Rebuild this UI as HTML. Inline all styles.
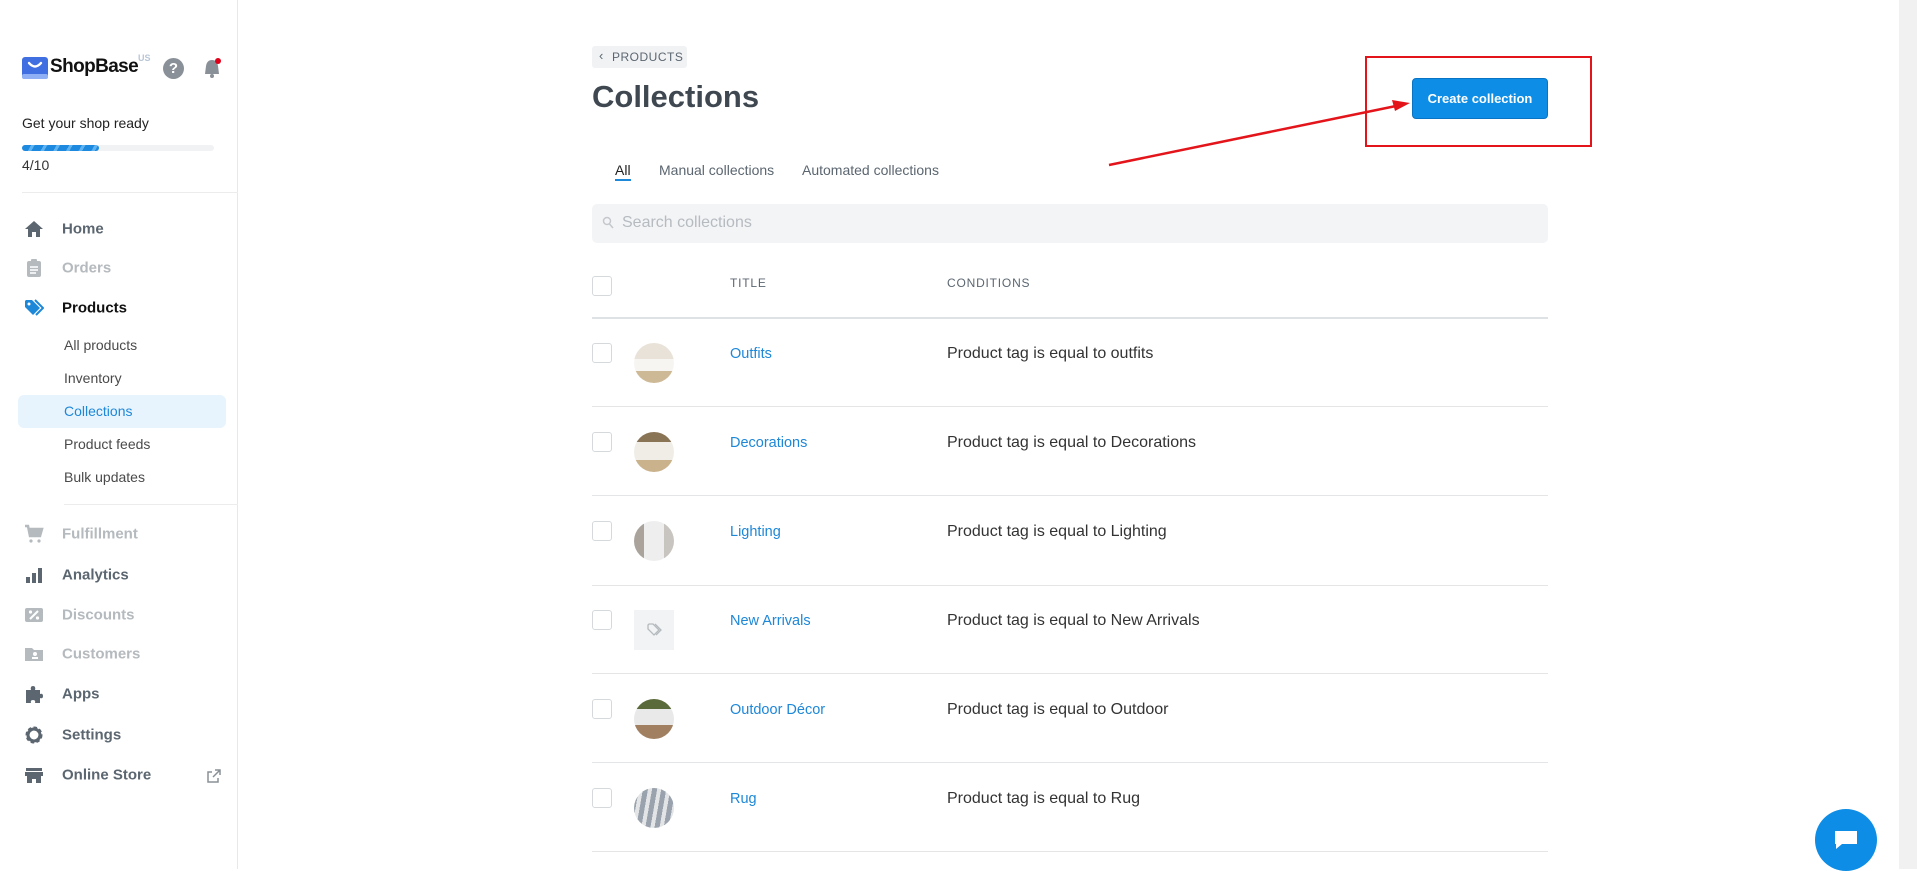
<!DOCTYPE html>
<html><head><meta charset="utf-8"><style>
*{margin:0;padding:0;box-sizing:border-box}
body{width:1917px;height:869px;overflow:hidden;background:#fff;font-family:"Liberation Sans",sans-serif;position:relative;color:#333}
.a{position:absolute;white-space:nowrap}
#sb{position:absolute;left:0;top:0;width:238px;height:869px;border-right:1px solid #e8e8e8;background:#fff}
.nav{position:absolute;left:62px;font-size:15px;font-weight:bold;color:#5b6670;transform:translateY(-50%)}
.nav.dim{color:#b5babe}
.ic{position:absolute;left:24px;width:20px;height:20px;transform:translateY(-50%)}
.sub{position:absolute;left:64px;font-size:14px;color:#4a4a4a;transform:translateY(-50%)}
.row{position:absolute;left:592px;width:956px;border-bottom:1px solid #e3e5e7}
.cb{position:absolute;width:20px;height:20px;border:1px solid #d6d9dc;border-radius:3px;background:#fff}
.th{position:absolute;width:40px;height:40px;border-radius:50%;overflow:hidden}
.tl{position:absolute;left:730px;font-size:14.5px;color:#1d87d8;transform:translateY(-50%)}
.cd{position:absolute;left:947px;font-size:16px;color:#333;transform:translateY(-50%)}
</style></head><body>
<div id="sb">
<svg class="a" style="left:22px;top:57px" width="26" height="22" viewBox="0 0 26 22"><rect x="0" y="0" width="26" height="22" rx="3" fill="#3f6fe0"/><rect x="0" y="17" width="26" height="5" rx="2" fill="#8fb0f5"/><path d="M7 6 Q13 13 19 6" stroke="#fff" stroke-width="2.4" fill="none" stroke-linecap="round"/></svg>
<div class="a" style="left:50px;top:56px;font-size:19px;font-weight:bold;color:#111;letter-spacing:-0.6px">ShopBase</div>
<div class="a" style="left:138px;top:53px;font-size:9px;font-weight:bold;color:#b9c6d6">US</div>
<div class="a" style="left:163px;top:58px;width:21px;height:21px;border-radius:50%;background:#8a9097;color:#fff;font-weight:bold;font-size:15px;text-align:center;line-height:21px">?</div>
<svg class="a" style="left:202px;top:57px" width="20" height="22" viewBox="0 0 20 22"><path d="M3 17 L4 9 Q5 3 10 3 Q15 3 16 9 L17 17 Z" fill="#8a9097"/><circle cx="10" cy="19" r="2" fill="#8a9097"/><circle cx="16" cy="4" r="3" fill="#e0001a"/></svg>
<div class="a" style="left:22px;top:115px;font-size:14px;color:#222">Get your shop ready</div>
<div class="a" style="left:22px;top:145px;width:192px;height:6px;border-radius:3px;background:#f0f2f4"></div>
<div class="a" style="left:22px;top:145px;width:77px;height:6px;border-radius:3px;background:repeating-linear-gradient(120deg,#1d8ae0 0 8px,#5fb3f0 8px 11px)"></div>
<div class="a" style="left:22px;top:157px;font-size:14px;color:#333">4/10</div>
<div class="a" style="left:22px;top:192px;width:216px;height:1px;background:#ececec"></div>
<svg class="ic" style="top:229px" viewBox="0 0 20 20"><path d="M10 2 L1 10 H4 V18 H8 V13 H12 V18 H16 V10 H19 Z" fill="#5b6670"/></svg><div class="nav" style="top:229px">Home</div>
<svg class="ic" style="top:268px" viewBox="0 0 20 20"><rect x="3" y="3" width="14" height="16" rx="2" fill="#b5babe"/><rect x="7" y="1" width="6" height="4" rx="1" fill="#b5babe"/><path d="M6 9h8M6 12h8M6 15h6" stroke="#fff" stroke-width="1.5"/></svg><div class="nav dim" style="top:268px">Orders</div>
<svg class="ic" style="top:308px" viewBox="0 0 20 20"><path d="M1 3 V9 L9 17 L16 10 L8 2 H2 Z" fill="#1d87d8"/><circle cx="5" cy="6" r="1.5" fill="#fff"/><path d="M11 2 L19 10 L12 17" stroke="#1d87d8" stroke-width="2" fill="none"/></svg><div class="nav" style="top:308px;color:#111">Products</div>
<div class="sub" style="top:345px">All products</div>
<div class="sub" style="top:378px">Inventory</div>
<div class="a" style="left:18px;top:395px;width:208px;height:33px;border-radius:6px;background:#e8f4fd"></div>
<div class="sub" style="top:411px;color:#1d87d8">Collections</div>
<div class="sub" style="top:444px">Product feeds</div>
<div class="sub" style="top:477px">Bulk updates</div>
<div class="a" style="left:64px;top:504px;width:174px;height:1px;background:#ececec"></div>
<svg class="ic" style="top:534px" viewBox="0 0 20 20"><path d="M1 2 H4 L6 12 H16 L18 5 H5" stroke="#b5babe" stroke-width="2.5" fill="#b5babe"/><circle cx="7" cy="17" r="1.6" fill="#b5babe"/><circle cx="15" cy="17" r="1.6" fill="#b5babe"/></svg><div class="nav dim" style="top:534px">Fulfillment</div>
<svg class="ic" style="top:575px" viewBox="0 0 20 20"><rect x="2" y="12" width="4" height="6" fill="#5b6670"/><rect x="8" y="8" width="4" height="10" fill="#5b6670"/><rect x="14" y="3" width="4" height="15" fill="#5b6670"/></svg><div class="nav" style="top:575px">Analytics</div>
<svg class="ic" style="top:615px" viewBox="0 0 20 20"><rect x="1" y="3" width="18" height="14" rx="2" fill="#b5babe"/><path d="M6 14 L14 6" stroke="#fff" stroke-width="2"/><circle cx="6.5" cy="7" r="1.6" fill="#fff"/><circle cx="13.5" cy="13" r="1.6" fill="#fff"/></svg><div class="nav dim" style="top:615px">Discounts</div>
<svg class="ic" style="top:654px" viewBox="0 0 20 20"><path d="M1 4 H8 L10 6 H19 V17 H1 Z" fill="#b5babe"/><circle cx="11" cy="10" r="2" fill="#fff"/><rect x="8" y="13" width="6" height="2" fill="#fff"/></svg><div class="nav dim" style="top:654px">Customers</div>
<svg class="ic" style="top:694px" viewBox="0 0 20 20"><path d="M2 6 H7 Q6 2 9 2 Q12 2 11 6 H16 V10 Q19 9 19 12 Q19 15 16 14 V19 H11 Q12 16 9 16 Q6 16 7 19 H2 Z" fill="#5b6670"/></svg><div class="nav" style="top:694px">Apps</div>
<svg class="ic" style="top:735px" viewBox="0 0 20 20"><circle cx="10" cy="10" r="6.5" fill="none" stroke="#5b6670" stroke-width="4" stroke-dasharray="3 2"/><circle cx="10" cy="10" r="6" fill="none" stroke="#5b6670" stroke-width="3"/></svg><div class="nav" style="top:735px">Settings</div>
<svg class="ic" style="top:775px" viewBox="0 0 20 20"><rect x="2" y="3" width="16" height="3" fill="#5b6670"/><rect x="1" y="7" width="18" height="4" fill="#5b6670"/><path d="M3 11 V18 H8 V14 H12 V18 H17 V11" fill="#5b6670"/></svg><div class="nav" style="top:775px">Online Store</div>
<svg class="a" style="left:207px;top:769px" width="14" height="14" viewBox="0 0 14 14"><path d="M8 1 H13 V6 M13 1 L6 8 M11 9 V13 H1 V3 H5" stroke="#8a9097" stroke-width="1.5" fill="none"/></svg>
</div>
<div class="a" style="left:1899px;top:0;width:18px;height:869px;background:#f1f1f1"></div>

<div class="a" style="left:592px;top:46px;width:95px;height:22px;background:#f1f2f4;border-radius:3px;font-size:12px;color:#5b6670;line-height:22px;padding-left:20px;letter-spacing:.5px">PRODUCTS</div>
<div class="a" style="left:599px;top:48px;font-size:13px;color:#5b6670">‹</div>
<div class="a" style="left:592px;top:79px;font-size:31px;font-weight:bold;color:#3f4850">Collections</div>
<div class="a" style="left:1412px;top:78px;width:136px;height:41px;border-radius:4px;background:#0d8de6;border:1px solid #0a74c4;color:#fff;font-size:13px;font-weight:bold;text-align:center;line-height:39px">Create collection</div>
<div class="a" style="left:1365px;top:56px;width:227px;height:91px;border:2px solid #e4141b"></div>
<svg class="a" style="left:0;top:0" width="1917" height="869"><line x1="1109" y1="165" x2="1396" y2="106" stroke="#e4141b" stroke-width="2.5"/><path d="M1410 103 L1392 100 L1395 111 Z" fill="#e4141b"/></svg>
<div class="a" style="left:615px;top:162px;font-size:14px;color:#222">All</div>
<div class="a" style="left:615px;top:179px;width:16px;height:2px;background:#1d87d8"></div>
<div class="a" style="left:659px;top:162px;font-size:14px;color:#5b6670">Manual collections</div>
<div class="a" style="left:802px;top:162px;font-size:14px;color:#5b6670">Automated collections</div>
<div class="a" style="left:592px;top:204px;width:956px;height:39px;border-radius:5px;background:#f3f4f6"></div>
<svg class="a" style="left:602px;top:216px" width="12" height="13" viewBox="0 0 12 13"><circle cx="5" cy="5" r="3.5" stroke="#c4c8cc" stroke-width="1.5" fill="none"/><path d="M7.5 8 L11 12" stroke="#c4c8cc" stroke-width="1.5"/></svg>
<div class="a" style="left:622px;top:214px;font-size:16px;color:#b6bbc0">Search collections</div>
<div class="cb" style="left:592px;top:276px"></div>
<div class="a" style="left:730px;top:276px;font-size:12px;color:#5b6670;letter-spacing:.8px">TITLE</div>
<div class="a" style="left:947px;top:276px;font-size:12px;color:#5b6670;letter-spacing:.8px">CONDITIONS</div>
<div class="a" style="left:592px;top:317px;width:956px;height:2px;background:#dfe2e5"></div>

<div class="row" style="top:319px;height:88px"></div>
<div class="row" style="top:407px;height:89px"></div>
<div class="row" style="top:496px;height:90px"></div>
<div class="row" style="top:586px;height:88px"></div>
<div class="row" style="top:674px;height:89px"></div>
<div class="row" style="top:763px;height:89px"></div>

<div class="cb" style="left:592px;top:343px"></div><div class="th" style="left:634px;top:343px;background:linear-gradient(180deg,#e8e2d8 0 40%,#f7f5f1 40% 70%,#cdb995 70%)"></div><div class="tl" style="top:354px">Outfits</div><div class="cd" style="top:354px">Product tag is equal to outfits</div>
<div class="cb" style="left:592px;top:432px"></div><div class="th" style="left:634px;top:432px;background:linear-gradient(180deg,#8a7456 0 25%,#f0ede6 25% 70%,#c9b28c 70%)"></div><div class="tl" style="top:443px">Decorations</div><div class="cd" style="top:443px">Product tag is equal to Decorations</div>
<div class="cb" style="left:592px;top:521px"></div><div class="th" style="left:634px;top:521px;background:linear-gradient(90deg,#a9a39c 0 25%,#eeeeee 25% 75%,#c8c4bf 75%)"></div><div class="tl" style="top:532px">Lighting</div><div class="cd" style="top:532px">Product tag is equal to Lighting</div>
<div class="cb" style="left:592px;top:610px"></div><div class="a" style="left:634px;top:610px;width:40px;height:40px;background:#f2f3f4"></div><svg class="a" style="left:646px;top:622px" width="16" height="16" viewBox="0 0 16 16"><path d="M2 3 V7 L8 13 L13 8 L7 2 H3 Z" stroke="#b5babe" stroke-width="1.3" fill="none"/><path d="M9 2 L15 8 L10 13" stroke="#b5babe" stroke-width="1.3" fill="none"/></svg><div class="tl" style="top:621px">New Arrivals</div><div class="cd" style="top:621px">Product tag is equal to New Arrivals</div>
<div class="cb" style="left:592px;top:699px"></div><div class="th" style="left:634px;top:699px;background:linear-gradient(180deg,#5a6a3a 0 25%,#e9e9ea 25% 65%,#a08060 65%)"></div><div class="tl" style="top:710px">Outdoor Décor</div><div class="cd" style="top:710px">Product tag is equal to Outdoor</div>
<div class="cb" style="left:592px;top:788px"></div><div class="th" style="left:634px;top:788px;background:repeating-linear-gradient(100deg,#9aa3ad 0 5px,#e2e4e6 5px 9px)"></div><div class="tl" style="top:799px">Rug</div><div class="cd" style="top:799px">Product tag is equal to Rug</div>

<div class="a" style="left:1815px;top:809px;width:62px;height:62px;border-radius:50%;background:#0d8de6"></div>
<svg class="a" style="left:1833px;top:828px" width="26" height="24" viewBox="0 0 26 24"><path d="M2 3 H24 V16 H9 L3 21 V16 H2 Z" fill="#fff"/></svg>
</body></html>
